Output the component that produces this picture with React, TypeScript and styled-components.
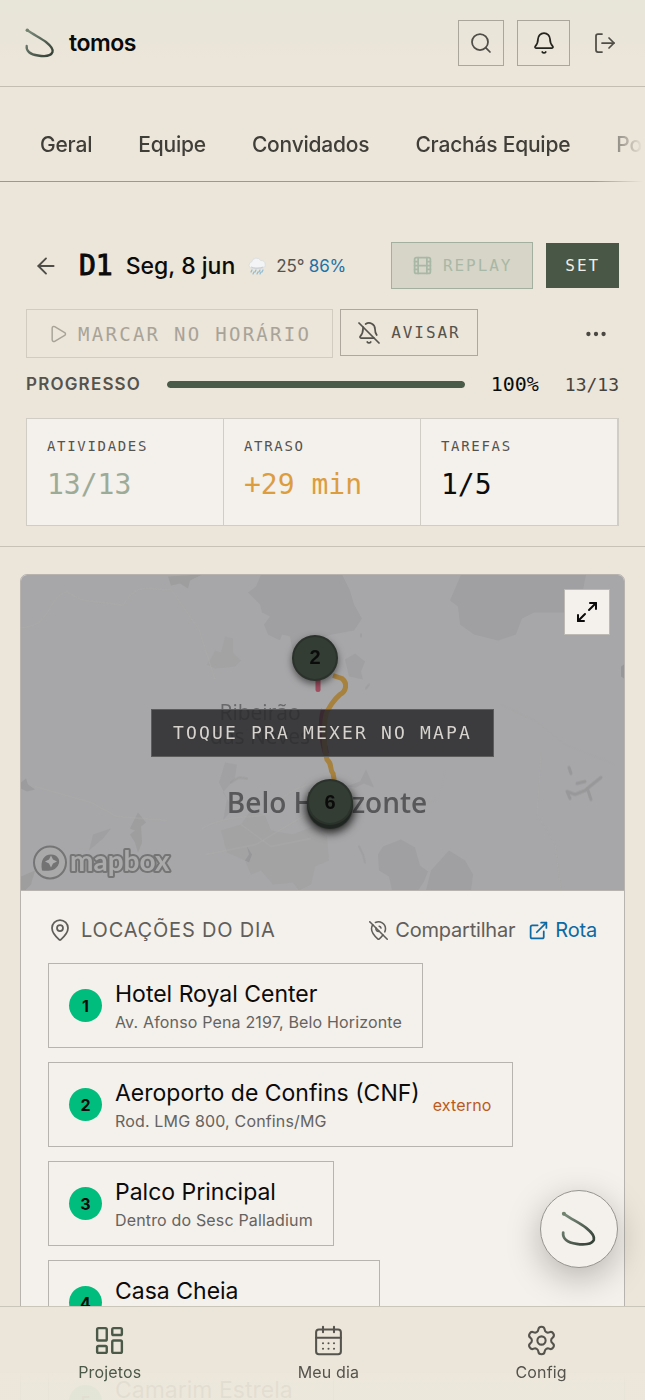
import styled, { createGlobalStyle, css } from 'styled-components'
import {
  ArrowLeft,
  Bell,
  BellOff,
  CalendarDays,
  Ellipsis,
  ExternalLink,
  Film,
  LayoutDashboard,
  LogOut,
  MapPin,
  MapPinOff,
  Maximize2,
  Play,
  Search,
  Settings,
} from 'lucide-react'

const tabs = ['Geral', 'Equipe', 'Convidados', 'Crachás Equipe', 'Portaria']

const stats = [
  { label: 'Atividades', value: '13/13', color: '#9cab98' },
  { label: 'Atraso', value: '+29 min', color: '#dc9d3e' },
  { label: 'Tarefas', value: '1/5', color: '#0b0b0b' },
]

const places = [
  { name: 'Hotel Royal Center', address: 'Av. Afonso Pena 2197, Belo Horizonte' },
  { name: 'Aeroporto de Confins (CNF)', address: 'Rod. LMG 800, Confins/MG', tag: 'externo' },
  { name: 'Palco Principal', address: 'Dentro do Sesc Palladium' },
  { name: 'Casa Cheia', address: 'R. Augusto de Lima 744, Centro' },
  { name: 'Camarim Estrela', address: 'Dentro do Sesc Palladium' },
]

function Swoosh ({ size, id }: { size: number; id: string }) {
  return (
    <svg width={size} height={size} viewBox="0 0 32 32" fill="none" aria-hidden="true">
      <defs>
        <linearGradient id={id} x1="2" y1="2" x2="28" y2="28" gradientUnits="userSpaceOnUse">
          <stop offset="0" stopColor="#7f9181" />
          <stop offset="1" stopColor="#343f36" />
        </linearGradient>
      </defs>
      <path
        d="M3 3C10 8 17 11 22 15C27 19 29.500 22 28.500 25C27 29 20 29.500 14 28.500C6 27.500 2 24 2.700 19"
        stroke={`url(#${id})`}
        strokeWidth="2.300"
        strokeLinecap="round"
      />
      <circle cx="3.300" cy="3.200" r="1.700" fill="#71836f" />
    </svg>
  )
}

function RainCloud () {
  return (
    <svg width="18" height="18" viewBox="0 0 18 18" aria-label="Chuva" role="img">
      <path d="M4 11.500a3.300 3.300 0 0 1-.4-6.500A5 5 0 0 1 12.800 3.600a4 4 0 0 1 1.200 7.900Z" fill="#f3f4f5" stroke="#d6dadc" strokeWidth=".7" />
      <path d="M3 10c3 1.600 9 1.600 12.500 0" fill="none" stroke="#c9d0d4" strokeWidth="1.300" />
      <path d="M4 13l-1 2M8 13l-1 2M12 13l-1 2M15 13l-1 2M6 15l-1 2M10 15l-1 2M13 15l-1 2" stroke="#8fbdd6" strokeWidth="1.200" strokeLinecap="round" />
    </svg>
  )
}

function CityMap () {
  return (
    <MapArt viewBox="0 0 603 316" preserveAspectRatio="xMidYMid slice" aria-hidden="true">
      <rect width="603" height="316" fill="#a7a7a9" />
      <g fill="#a0a0a2">
        <path d="M240 0l-5 12-8 6 12 12 2 8 8 4-6 8 4 10 12 6 2-6 8 2 2 12 10 4 4-10 26-8 22-4 8-12-8-14-4-14-8-16Z" />
        <path d="M440 0l-5 12-6 14 8 6 2 18 14 10 24 6 18-6 6-16 12-6h33l14-12 5-26-8-6Z" />
        <path d="M357 280l5-8 18-7 14 8 5 18 8 6-4 10-6 9h-26l-3-14-10-6Z" />
        <path d="M405 316l5-20 18-20 16 10 8 14-2 16Z" />
        <path d="M200 256l20-6 10-14 14 5 6 15 22 4 20-8 14 10 2 24-14 6-4 18-12 6-6-8-20 2-12-14-10 4-6-14-18-8Z" opacity=".6" />
        <path d="M190 84l4-8 6 2 4-16 8 2 0 14 8 8-6 6-20 2-8-4Z" opacity=".6" />
        <path d="M324 85l10-6 10 8-4 10 2 8-14-3Z" />
        <path d="M204 188l12 2-2 14-12 14 10 16-10 12 4-22-8-16Z" opacity=".8" />
      </g>
      <g fill="#97979a">
        <path d="M147 2l34-2-12 6-2 8-8-5-9 2Z" opacity=".6" />
        <path d="M0 208l5-4 2 6 7 5-8 2-6-3Z" opacity=".7" />
        <path d="M109 254l8-16 8 10-5 4 1 16-4 10-3-10-5-8 5-4Z" opacity=".6" />
        <path d="M68 276l4-16 18-6-8 10Z" opacity=".4" />
        <path d="M224 286l4-6-2-8 5 8-3 8Z" />
        <path d="M0 302l14-6-4 14-6 6H0Z" opacity=".6" />
        <path d="M600 92l3-2v14l-3-2Z" />
        <path d="M325 212l14-5 6-12 8 18-10-4-8 4Z" opacity=".4" />
      </g>
      <g fill="none" stroke="#929294" strokeWidth="3" strokeLinecap="round" strokeLinejoin="round" opacity=".7">
        <path d="M549 224l-3-7 8 3 10-4 6-5 10-8M567 216l3 9M548 193l2 6M556 209l8-2" />
        <path d="M340 60v2M348 110l-3 4" opacity=".5" strokeWidth="2" />
        <path d="M338 272l4 8 2 8" opacity=".4" strokeWidth="2" />
        <path d="M210 208l8-5 8 1" opacity=".6" strokeWidth="2" />
      </g>
      <g fill="none" stroke="#acabaa" strokeWidth="1" opacity=".8">
        <path d="M0 53c30 0 26-30 46-36 20 14 28 8 56 14 14-26 30-14 48-16l28 40 16 50" />
        <path d="M14 212l56 16 26 14 50 4M181 254c26-14 44-10 64-14 18-20 26-26 50-32" />
        <path d="M308 234l30-10 40 6 40-4 6-30M480 130l34 16 30 24 50 20M520 180l-4 60 18 30 6 46" opacity=".5" />
        <path d="M185 280l50-10 50-30M220 250l30 22 40-8" />
      </g>
      <g fontFamily="'Open Sans', sans-serif" textAnchor="middle">
        <g fill="#69696c" fontSize="21">
          <text x="239" y="145">Ribeirão</text>
          <text x="239" y="169">das Neves</text>
        </g>
        <text x="306" y="238" fill="#58585b" fontSize="28" fontWeight="600">Belo Horizonte</text>
      </g>
      <path d="M297 98v17" stroke="#a04e61" strokeWidth="5" strokeLinecap="round" />
      <path d="M303 135c-4 14-2 30 2 44" stroke="#9b2948" strokeWidth="6" fill="none" />
      <path d="M312 101l9 3c6 5 4 13-2 16-6 5-12 14-14 20-3 14-2 34 1 45 6 5 2 10 6 14l2 11" stroke="#a7813e" strokeWidth="5" fill="none" strokeLinejoin="round" />
      <g>
        <circle cx="29" cy="288" r="16" fill="#a9a9aa" stroke="#757576" strokeWidth="2" />
        <path d="M21 296c-2-10 2-16 9-16 7 0 10 6 7 11-3 5-9 6-16 5Z" fill="#737374" />
        <path d="M30 281l2 4 4 2-4 2-2 4-2-4-4-2 4-2Z" fill="#adadae" />
        <text
          x="49"
          y="296"
          fontFamily="Lato, sans-serif"
          fontSize="28"
          fontWeight="700"
          fill="#aaaaab"
          stroke="#757576"
          strokeWidth="4"
          strokeLinejoin="round"
          paintOrder="stroke"
        >
          mapbox
        </text>
      </g>
    </MapArt>
  )
}

function App () {
  return (
    <>
      <GlobalStyle />
      <Shell>
        <TopBar>
          <Brand href="#inicio">
            <Swoosh size={32} id="brand-swoosh" />
            tomos
          </Brand>
          <TopActions>
            <IconButton $width={46} $framed aria-label="Buscar"><Search size={24} strokeWidth={1.75} /></IconButton>
            <IconButton $width={53} $framed $strong aria-label="Notificações"><Bell size={24} strokeWidth={1.75} /></IconButton>
            <IconButton $width={43} aria-label="Sair"><LogOut size={24} strokeWidth={1.75} /></IconButton>
          </TopActions>
        </TopBar>

        <Tabs>
          {tabs.map(tab => <Tab key={tab} href="#aba">{tab}</Tab>)}
        </Tabs>

        <DayHeader>
          <DayRow>
            <BackButton aria-label="Voltar"><ArrowLeft size={26} strokeWidth={1.75} /></BackButton>
            <DayTitle>
              <DayCode>D1</DayCode>
              <DayDate>Seg, 8 jun</DayDate>
            </DayTitle>
            <Weather>
              <RainCloud />
              <span>25° <Rain>86%</Rain></span>
            </Weather>
            <DayActions>
              <ActionButton $tone="soft" disabled><Film size={21} strokeWidth={2} />Replay</ActionButton>
              <ActionButton $tone="solid">Set</ActionButton>
            </DayActions>
          </DayRow>

          <ToolRow>
            <ActionButton $tone="ghost" disabled><Play size={20} strokeWidth={1.75} />Marcar no horário</ActionButton>
            <ActionButton $tone="outline"><BellOff size={24} strokeWidth={1.75} />Avisar</ActionButton>
            <MoreButton aria-label="Mais opções"><Ellipsis size={26} strokeWidth={2} /></MoreButton>
          </ToolRow>

          <ProgressRow>
            <ProgressLabel id="progress-label">Progresso</ProgressLabel>
            <Track role="progressbar" aria-labelledby="progress-label" aria-valuenow={100}>
              <Fill style={{ width: '100%' }} />
            </Track>
            <Percent>100%</Percent>
            <Count>13/13</Count>
          </ProgressRow>

          <Stats>
            {stats.map(stat => (
              <Stat key={stat.label}>
                <StatLabel>{stat.label}</StatLabel>
                <StatValue $color={stat.color}>{stat.value}</StatValue>
              </Stat>
            ))}
          </Stats>
        </DayHeader>

        <Content>
          <Card>
            <MapBox>
              <CityMap />
              <Marker $x={294} $y={83}>2</Marker>
              <Marker $x={309} $y={228} $stacked>6</Marker>
              <MapVeil><MapHint>Toque pra mexer no mapa</MapHint></MapVeil>
              <ExpandButton aria-label="Expandir mapa"><Maximize2 size={24} strokeWidth={2} /></ExpandButton>
            </MapBox>

            <Places>
              <PlacesHead>
                <PlacesTitle><MapPin size={24} strokeWidth={1.75} />Locações do dia</PlacesTitle>
                <ShareButton><MapPinOff size={21} strokeWidth={1.75} />Compartilhar</ShareButton>
                <RouteLink href="#rota"><ExternalLink size={21} strokeWidth={2} />Rota</RouteLink>
              </PlacesHead>
              <PlaceList>
                {places.map((place, i) => (
                  <Place key={place.name}>
                    <Badge>{i + 1}</Badge>
                    <div>
                      <PlaceName>{place.name}</PlaceName>
                      <PlaceAddress>{place.address}</PlaceAddress>
                    </div>
                    {place.tag && <PlaceTag>{place.tag}</PlaceTag>}
                  </Place>
                ))}
              </PlaceList>
            </Places>
          </Card>
        </Content>
      </Shell>

      <Assistant aria-label="Assistente"><Swoosh size={38} id="assistant-swoosh" /></Assistant>

      <BottomNav>
        <NavLink href="#projetos" $active><LayoutDashboard size={33} strokeWidth={1.75} />Projetos</NavLink>
        <NavLink href="#meu-dia"><CalendarDays size={33} strokeWidth={1.5} />Meu dia</NavLink>
        <NavLink href="#config"><Settings size={33} strokeWidth={1.5} />Config</NavLink>
      </BottomNav>
    </>
  )
}

const sans = "Inter, 'Liberation Sans', sans-serif"
const mono = "'DejaVu Sans Mono', 'Liberation Mono', monospace"

const GlobalStyle = createGlobalStyle`
  * {
    box-sizing: border-box;
  }

  body {
    margin: 0;
    background: #ece5d9;
    color: #0b0b0b;
    font-family: ${sans};
  }

  button {
    padding: 0;
    border: 0;
    background: none;
    color: inherit;
    font: inherit;
  }

  a {
    color: inherit;
    text-decoration: none;
  }

  svg {
    flex-shrink: 0;
  }
`

const Shell = styled.div`
  height: 100vh;
  overflow-y: auto;
  scrollbar-width: none;
  background: linear-gradient(180deg, #e8e5d9 0, #ece5d9 60px, #ece5d9 100%);
`

const TopBar = styled.header`
  display: flex;
  align-items: center;
  justify-content: space-between;
  height: 87px;
  padding: 0 19px 0 24px;
  border-bottom: 1px solid #c3bdb2;
`

const Brand = styled.a`
  display: flex;
  align-items: center;
  gap: 13px;
  font-weight: 600;
  font-size: 23px;
  letter-spacing: -0.02em;
`

const TopActions = styled.div`
  display: flex;
  gap: 13px;
`

const IconButton = styled.button<{ $width: number; $framed?: boolean; $strong?: boolean }>`
  display: flex;
  align-items: center;
  justify-content: center;
  width: ${p => p.$width}px;
  height: 46px;
  color: ${p => (p.$strong ? '#24241f' : '#4f4d47')};
  ${p => p.$framed && css`
    border: 1px solid #aba69b;
  `}
`

const Tabs = styled.nav`
  display: flex;
  height: 95px;
  padding: 20px 0 0 17px;
  overflow: hidden;
  border-bottom: 1px solid #9d978c;
  mask-image: linear-gradient(90deg, #000 calc(100% - 52px), transparent calc(100% - 2px));
`

const Tab = styled.a`
  display: flex;
  align-items: center;
  padding: 0 23px;
  color: #403e39;
  font-weight: 500;
  font-size: 21px;
  letter-spacing: -0.01em;
  white-space: nowrap;
`

const DayHeader = styled.section`
  display: flex;
  flex-direction: column;
  padding: 60px 26px 20px;
  border-bottom: 1px solid #c8c1b5;
`

const DayRow = styled.div`
  display: flex;
  align-items: center;
  gap: 13px;
`

const BackButton = styled.button`
  display: flex;
  justify-content: center;
  width: 40px;
  color: #4f4d47;
`

const DayTitle = styled.h1`
  display: flex;
  align-items: center;
  gap: 13px;
  margin: 0;
  font-weight: 500;
  white-space: nowrap;
`

const DayCode = styled.span`
  font-family: ${mono};
  font-weight: 400;
  font-size: 28px;
  line-height: 32px;
  -webkit-text-stroke: 1px currentColor;
`

const DayDate = styled.span`
  font-size: 23px;
  line-height: 32px;
`

const Weather = styled.div`
  display: flex;
  align-items: center;
  gap: 10px;
  color: #55534d;
  font-size: 17px;
  letter-spacing: -0.01em;
  white-space: nowrap;
`

const Rain = styled.span`
  color: #1c72a8;
`

const DayActions = styled.div`
  display: flex;
  align-items: center;
  gap: 13px;
  margin-left: auto;
`

const tones = {
  soft: css`
    height: 47px;
    padding: 0 20px;
    border: 1px solid #a4b09f;
    background: #d6d5c7;
    color: #a9b8a6;
  `,
  solid: css`
    height: 45px;
    padding: 0 19px;
    background: #485746;
    color: #f0ede6;
  `,
  ghost: css`
    height: 49px;
    padding: 0 21px;
    border: 1px solid #d2cbbf;
    color: #a8a398;
    font-size: 19px;
  `,
  outline: css`
    height: 47px;
    padding: 0 16px;
    border: 1px solid #ada79d;
    color: #55534d;
  `,
}

const ActionButton = styled.button<{ $tone: keyof typeof tones }>`
  display: flex;
  align-items: center;
  gap: 10px;
  font-family: ${mono};
  font-size: 16px;
  letter-spacing: 0.12em;
  text-transform: uppercase;
  white-space: nowrap;
  ${p => tones[p.$tone]}
`

const ToolRow = styled.div`
  display: flex;
  gap: 7px;
  margin-top: 20px;
`

const MoreButton = styled.button`
  display: flex;
  align-items: center;
  justify-content: center;
  width: 46px;
  margin-left: auto;
  color: #4a4843;
`

const ProgressRow = styled.div`
  display: flex;
  align-items: center;
  gap: 26px;
  margin-top: 14px;
  font-family: ${mono};
  line-height: 25px;
`

const ProgressLabel = styled.span`
  color: #55534d;
  font-family: ${sans};
  font-weight: 600;
  font-size: 17px;
  letter-spacing: 0.07em;
  text-transform: uppercase;
`

const Track = styled.div`
  flex: 1;
  height: 7px;
  overflow: hidden;
  border-radius: 4px;
  background: #d6d0c3;
`

const Fill = styled.div`
  height: 100%;
  border-radius: 4px;
  background: #4b5b49;
`

const Percent = styled.span`
  font-size: 20px;
`

const Count = styled.span`
  color: #45433e;
  font-size: 18px;
`

const Stats = styled.dl`
  display: grid;
  grid-template-columns: repeat(3, 1fr);
  margin: 21px 0 0;
  border: 1px solid #d0cdc6;
  background: #f4f0eb;
`

const Stat = styled.div`
  padding: 16px 20px 22px;
  border-right: 1px solid #d0cdc6;
`

const StatLabel = styled.dt`
  color: #55534f;
  font-family: ${mono};
  font-size: 14px;
  line-height: 22px;
  letter-spacing: 0.12em;
  text-transform: uppercase;
`

const StatValue = styled.dd<{ $color: string }>`
  margin: 10px 0 0;
  color: ${p => p.$color};
  font-family: ${mono};
  font-size: 28px;
  line-height: 36px;
`

const Content = styled.main`
  padding: 27px 20px 120px;
`

const Card = styled.section`
  overflow: hidden;
  border: 1px solid #b7b4af;
  border-radius: 7px;
  background: #f4f0eb;
`

const MapBox = styled.div`
  position: relative;
  height: 316px;
  border-bottom: 1px solid #b7b4af;
`

const MapArt = styled.svg`
  display: block;
  width: 100%;
  height: 100%;
`

const Marker = styled.span<{ $x: number; $y: number; $stacked?: boolean }>`
  position: absolute;
  left: ${p => (p.$x / 603) * 100}%;
  top: ${p => (p.$y / 316) * 100}%;
  display: flex;
  align-items: center;
  justify-content: center;
  width: 46px;
  height: 46px;
  margin: -23px 0 0 -23px;
  border: 2px solid #2a322b;
  border-radius: 50%;
  background: #333d34;
  box-shadow: ${p => (p.$stacked
    ? '0 4px 1px #1f2520, 0 6px 10px 2px rgba(0, 0, 0, 0.8)'
    : '0 3px 7px rgba(0, 0, 0, 0.5)')};
  font-family: 'Liberation Sans', sans-serif;
  font-weight: 700;
  font-size: 20px;
`

const MapVeil = styled.button`
  position: absolute;
  inset: 0;
  display: flex;
  align-items: center;
  justify-content: center;
`

const MapHint = styled.span`
  padding: 0 21px;
  border: 1px solid #5c5c5d;
  background: rgba(42, 42, 44, 0.86);
  color: #d6d3ce;
  font-family: ${mono};
  font-size: 18px;
  line-height: 46px;
  letter-spacing: 0.12em;
  text-transform: uppercase;
  white-space: nowrap;
`

const ExpandButton = styled.button`
  position: absolute;
  top: 14px;
  right: 14px;
  display: flex;
  align-items: center;
  justify-content: center;
  width: 46px;
  height: 46px;
  border: 1px solid #bdbab6;
  background: #f4f0eb;
`

const Places = styled.div`
  padding: 23px 27px;
`

const PlacesHead = styled.div`
  display: flex;
  align-items: center;
  font-size: 20px;
  line-height: 32px;
  letter-spacing: -0.01em;
  white-space: nowrap;
`

const PlacesTitle = styled.h2`
  display: flex;
  align-items: center;
  gap: 9px;
  margin: 0 auto 0 0;
  color: #605e5a;
  font-weight: 400;
  font-size: 20px;
  letter-spacing: 0.04em;
  text-transform: uppercase;
`

const ShareButton = styled.button`
  display: flex;
  align-items: center;
  gap: 6px;
  margin-right: 13px;
  color: #605e5a;
  letter-spacing: inherit;
`

const RouteLink = styled.a`
  display: flex;
  align-items: center;
  gap: 6px;
  color: #0d69a3;
`

const PlaceList = styled.ol`
  display: flex;
  flex-direction: column;
  align-items: flex-start;
  gap: 14px;
  margin: 17px 0 0;
  padding: 0;
  list-style: none;
`

const Place = styled.li`
  display: flex;
  align-items: center;
  gap: 13px;
  padding: 14px 20px;
  border: 1px solid #b7b4af;
`

const Badge = styled.span`
  display: flex;
  align-items: center;
  justify-content: center;
  width: 33px;
  height: 33px;
  border-radius: 50%;
  background: #00bd7d;
  font-weight: 700;
  font-size: 16px;
`

const PlaceName = styled.div`
  font-size: 23px;
  line-height: 33px;
`

const PlaceAddress = styled.div`
  color: #65635f;
  font-size: 16px;
  line-height: 22px;
  letter-spacing: 0.01em;
`

const PlaceTag = styled.span`
  color: #bb5a1c;
  font-size: 16px;
  letter-spacing: 0.01em;
`

const Assistant = styled.button`
  position: fixed;
  right: 27px;
  bottom: 132px;
  display: flex;
  align-items: center;
  justify-content: center;
  width: 78px;
  height: 78px;
  border: 1px solid #96948f;
  border-radius: 50%;
  background: #f4f0eb;
  box-shadow: 0 10px 34px rgba(0, 0, 0, 0.25);
`

const BottomNav = styled.nav`
  position: fixed;
  right: 0;
  bottom: 0;
  left: 0;
  display: flex;
  justify-content: space-around;
  height: 94px;
  padding-top: 17px;
  border-top: 1px solid #cbc6ba;
  background: linear-gradient(180deg, #ece6da 70%, rgba(236, 230, 218, 0.96) 80%);
`

const NavLink = styled.a<{ $active?: boolean }>`
  display: flex;
  flex-direction: column;
  align-items: center;
  gap: 3px;
  color: ${p => (p.$active ? '#4b5949' : '#55534d')};
  font-size: 16px;
  line-height: 24px;
  letter-spacing: 0.01em;
`

export default App
